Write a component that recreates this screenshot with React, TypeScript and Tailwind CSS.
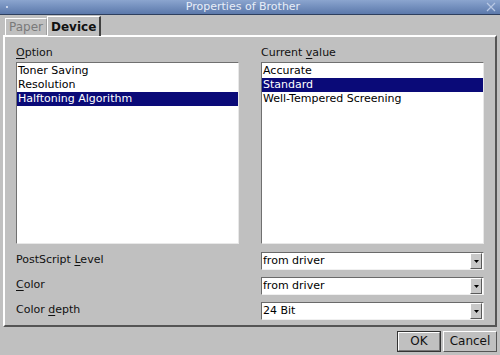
import React from "react";

const font = { fontFamily: '"DejaVu Sans", sans-serif' };

function ListBox(props: { items: string[]; selected: number }) {
  return (
    <div className="h-[182px] bg-white border-t border-l border-t-[#707070] border-l-[#707070] border-b border-r border-b-[#e8e8e8] border-r-[#e8e8e8] pt-[1px]">
      {props.items.map((item, i) => (
        <div
          key={item}
          className={
            "h-[14px] leading-[14px] px-[1px] text-[11px] " +
            (i === props.selected ? "bg-[#0a0a78] text-white" : "text-black")
          }
        >
          {item}
        </div>
      ))}
    </div>
  );
}

function Combo(props: { value: string }) {
  return (
    <div className="flex h-[18px] bg-white border-t border-l border-t-[#6a6a6a] border-l-[#6a6a6a] border-b border-r border-b-[#f0f0f0] border-r-[#f0f0f0]">
      <div className="flex-1 text-[11px] leading-[16px] pl-[1px] text-black">{props.value}</div>
      <div className="w-[12px] h-[16px] mr-[1px] bg-[#c8c8c8] border-t border-l border-white border-b border-r border-b-[#5a5a5a] border-r-[#5a5a5a] flex items-center justify-center">
        <svg width="5" height="3" viewBox="0 0 5 3">
          <path d="M0 0 H5 L2.5 3 Z" fill="#000" />
        </svg>
      </div>
    </div>
  );
}

function U(props: { children: string }) {
  return <span className="underline underline-offset-2">{props.children}</span>;
}

export default function App() {
  return (
    <div className="w-[500px] h-[355px] bg-[#c0c0c0] flex flex-col overflow-hidden text-[#111]" style={font}>
      <div className="h-[15px] bg-gradient-to-b from-[#8ba5cf] to-[#5c79ab] border-b border-[#2e3f5e] flex items-center relative">
        <div className="w-[2px] h-[2px] bg-[#c8d4ea] ml-[6px]" />
        <div className="flex-1 text-center text-[11px] leading-[14px] text-[#e8eef8] -ml-[8px]">Properties of Brother</div>
        <svg width="10" height="10" viewBox="0 0 10 10" className="mr-[4px]">
          <path d="M1 1 L9 9 M9 1 L1 9" stroke="#b8c8e4" strokeWidth="1.2" />
        </svg>
      </div>

      <div className="flex items-end h-[20px] pl-[5px]">
        <div className="h-[17px] px-[3px] text-[12px] leading-[16px] text-[#7a7a7a] border-t border-l border-white border-r border-r-[#a0a0a0]">
          Paper
        </div>
        <div className="h-[20px] px-[3px] text-[12px] font-bold leading-[20px] text-[#111] border-t border-l border-white border-r-2 border-r-[#404040] -mb-[1px] bg-[#c0c0c0] relative z-10">
          Device
        </div>
      </div>

      <div className="mx-[3px] h-[292px] border-t-2 border-l-2 border-white border-b-2 border-r-2 border-b-[#555] border-r-[#555] px-[11px] pt-[9px]">
        <div className="flex gap-[22px]">
          <div className="w-[223px]">
            <div className="text-[11px] leading-[14px] mb-[2px]">
              <U>O</U>ption
            </div>
            <ListBox items={["Toner Saving", "Resolution", "Halftoning Algorithm"]} selected={2} />
          </div>
          <div className="w-[223px]">
            <div className="text-[11px] leading-[14px] mb-[2px]">
              Current <U>v</U>alue
            </div>
            <ListBox items={["Accurate", "Standard", "Well-Tempered Screening"]} selected={1} />
          </div>
        </div>

        <div className="flex flex-col gap-[7px] mt-[8px]">
          <div className="flex gap-[22px] items-start">
            <div className="w-[223px] text-[11px] leading-[14px] mt-[1px]">
              PostScript <U>L</U>evel
            </div>
            <div className="w-[223px]"><Combo value="from driver" /></div>
          </div>
          <div className="flex gap-[22px] items-start">
            <div className="w-[223px] text-[11px] leading-[14px] mt-[1px]">
              <U>C</U>olor
            </div>
            <div className="w-[223px]"><Combo value="from driver" /></div>
          </div>
          <div className="flex gap-[22px] items-start">
            <div className="w-[223px] text-[11px] leading-[14px] mt-[1px]">
              Color <U>d</U>epth
            </div>
            <div className="w-[223px]"><Combo value="24 Bit" /></div>
          </div>
        </div>
      </div>

      <div className="flex justify-end gap-[2px] pr-[3px] pt-[4px]">
        <div className="w-[44px] h-[21px] border border-[#333] flex">
          <div className="flex-1 border-t border-l border-white border-b border-r border-b-[#777] border-r-[#777] text-[12px] leading-[17px] text-center">
            OK
          </div>
        </div>
        <div className="w-[54px] h-[21px] border-t border-l border-white border-b border-r border-b-[#555] border-r-[#555] text-[12px] leading-[19px] text-center">
          Cancel
        </div>
      </div>
    </div>
  );
}
